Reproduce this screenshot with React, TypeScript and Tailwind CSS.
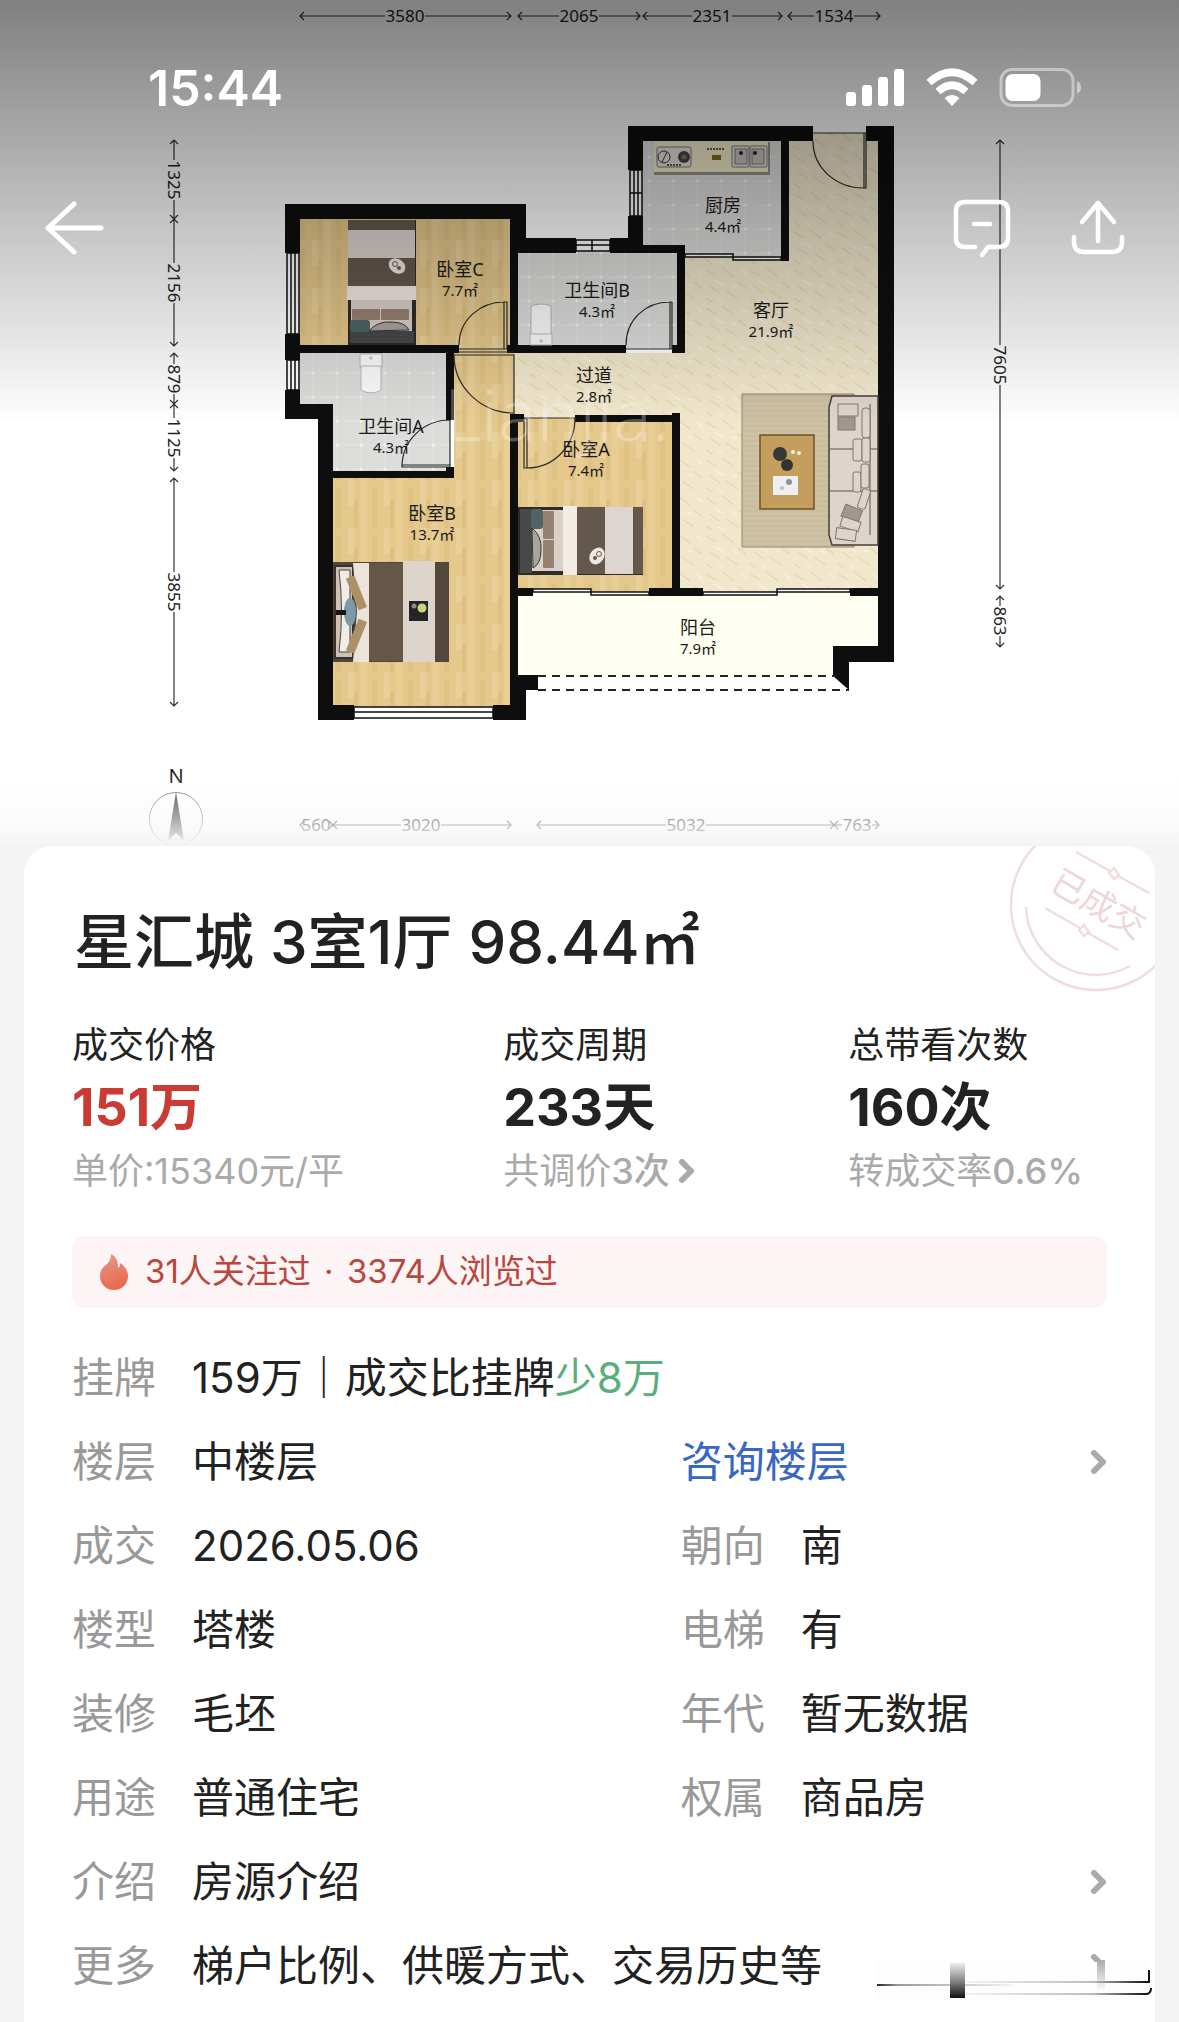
import type { ReactNode } from "react";

const wall = "#0e0e0e";

const rooms = [
  { name: "卧室C", area: "7.7㎡", x: 460, y: 276 },
  { name: "卫生间B", area: "4.3㎡", x: 597, y: 297 },
  { name: "厨房", area: "4.4㎡", x: 723, y: 212 },
  { name: "客厅", area: "21.9㎡", x: 771, y: 317 },
  { name: "过道", area: "2.8㎡", x: 594, y: 382 },
  { name: "卫生间A", area: "4.3㎡", x: 391, y: 433 },
  { name: "卧室A", area: "7.4㎡", x: 586, y: 456 },
  { name: "卧室B", area: "13.7㎡", x: 432, y: 520 },
  { name: "阳台", area: "7.9㎡", x: 698, y: 634 },
];

// from / to along the axis, `at` is the middle of the number
const topSizes = [
  { from: 300, to: 511, at: 405, label: "3580" },
  { from: 518, to: 640, at: 579, label: "2065" },
  { from: 643, to: 782, at: 712, label: "2351" },
  { from: 788, to: 880, at: 834, label: "1534" },
];
const bottomSizes = [
  { from: 300, to: 333, at: 316, label: "560" },
  { from: 333, to: 511, at: 421, label: "3020" },
  { from: 537, to: 834, at: 686, label: "5032" },
  { from: 834, to: 879, at: 857, label: "763" },
];
const leftSizes = [
  { from: 140, to: 219, at: 180, label: "1325" },
  { from: 219, to: 346, at: 283, label: "2156" },
  { from: 353, to: 404, at: 379, label: "879" },
  { from: 404, to: 471, at: 438, label: "1125" },
  { from: 478, to: 706, at: 592, label: "3855" },
];
const rightSizes = [
  { from: 140, to: 589, at: 365, label: "7605" },
  { from: 596, to: 647, at: 621, label: "863" },
];

type Size = { from: number; to: number; at: number; label: string };

function SizeLine({ size }: { size: Size }) {
  const half = size.label.length * 5;
  return (
    <g>
      <path
        d={`M${size.from} 0H${size.at - half}M${size.at + half} 0H${size.to}M${size.from + 4} -4L${size.from} 0L${size.from + 4} 4M${size.to - 4} -4L${size.to} 0L${size.to - 4} 4`}
        fill="none"
        stroke="#333"
        strokeWidth="1.2"
      />
      <text x={size.at} y="6" textAnchor="middle" fontSize="17" fill="#222">
        {size.label}
      </text>
    </g>
  );
}

// head of the bed on the left, 125 x 69
function Bed() {
  return (
    <g>
      <rect x="0" y="1" width="125" height="68" fill="#2f2b28" />
      <rect x="2" y="3" width="12" height="64" fill="#474948" />
      <rect x="14" y="4" width="34" height="61" fill="#d9d0c9" />
      <rect x="13" y="3" width="12" height="20" rx="3" fill="#4f6465" />
      <path d="M14 22Q24 30 23 44Q23 58 15 62Z" fill="#a8a4a0" stroke="#3b3532" />
      <rect x="25" y="5" width="11" height="28" rx="1" fill="#978171" />
      <rect x="25" y="34" width="11" height="28" rx="1" fill="#978171" />
      <rect x="45" y="0" width="14" height="69" fill="#f3ece4" />
      <rect x="59" y="1" width="28" height="67" fill="#64584d" />
      <rect x="87" y="1" width="28" height="67" fill="#ddd5d0" />
      <rect x="115" y="1" width="10" height="67" fill="#64584d" />
      <ellipse cx="79" cy="50" rx="7" ry="9" transform="rotate(35 79 50)" fill="#eee8e4" />
      <circle cx="77" cy="52" r="2" fill="#6b5a50" />
      <circle cx="81" cy="48" r="2.5" fill="none" stroke="#6b5a50" />
    </g>
  );
}

function DoubleBed() {
  return (
    <g>
      <rect x="333" y="562" width="116" height="100" fill="#51463c" />
      <rect x="335" y="566" width="18" height="92" fill="#cfc2b5" stroke="#3a312b" strokeWidth="2" />
      <path d="M339 570H350V652H339Q344 611 339 570Z" fill="#f2ece7" stroke="#4a403a" />
      <path d="M353 563H369V662H353L357 611Z" fill="#ece3da" />
      <rect x="352" y="576" width="9" height="34" transform="rotate(-22 356 593)" fill="#ab9165" />
      <rect x="352" y="619" width="9" height="34" transform="rotate(22 356 636)" fill="#ab9165" />
      <ellipse cx="350" cy="612" rx="6" ry="14" fill="#7d9ba6" />
      <path d="M336 610H346V615H336Z" fill="#161616" />
      <rect x="369" y="563" width="34" height="98" fill="#655648" />
      <rect x="403" y="561" width="32" height="101" fill="#ddd5cc" />
      <rect x="435" y="563" width="14" height="98" fill="#54483d" />
      <rect x="409" y="601" width="19" height="20" fill="#242424" />
      <circle cx="422" cy="608" r="4.5" fill="#c8d67a" />
      <circle cx="414" cy="606" r="2.5" fill="#8b8b8b" />
    </g>
  );
}

function Sofa() {
  return (
    <g>
      <path d="M742 394H854V547H742Z" fill="#cfc1a4" stroke="#8e836c" />
      <path d="M742 394H854V547H742Z" fill="url(#rug)" />
      <rect x="760" y="435" width="54" height="74" fill="#c49e5c" stroke="#6d5129" strokeWidth="1.5" />
      <circle cx="780" cy="454" r="7" fill="#353838" />
      <circle cx="787" cy="465" r="6" fill="#303333" />
      <circle cx="793" cy="452" r="2" fill="#f4eee0" />
      <circle cx="799" cy="453" r="2" fill="#f4eee0" />
      <rect x="773" y="476" width="25" height="19" fill="#eeeff0" />
      <circle cx="789" cy="482" r="3" fill="#87949a" />
      <circle cx="782" cy="488" r="2" fill="#b8c0c4" />
      <path d="M832 396H878V545H832L829 535V407Z" fill="#ddd4cc" stroke="#463d37" strokeWidth="1.5" />
      <path d="M830 449H878M830 491H878M870 404V535" stroke="#5a504a" fill="none" />
      <g fill="#ddd4cc" stroke="#81766f">
        <rect x="838" y="404" width="20" height="12" />
        <rect x="838" y="417" width="17" height="13" fill="#9f9792" />
        <rect x="862" y="408" width="8" height="30" rx="3" />
        <rect x="853" y="439" width="9" height="22" rx="2" />
        <rect x="862" y="438" width="8" height="24" rx="2" />
        <rect x="853" y="472" width="8" height="20" rx="2" />
        <rect x="861" y="464" width="8" height="24" rx="2" />
        <rect x="860" y="489" width="8" height="20" rx="2" transform="rotate(18 864 499)" />
        <rect x="843" y="507" width="18" height="13" transform="rotate(22 852 513)" fill="#9f9792" />
        <rect x="841" y="519" width="19" height="10" transform="rotate(18 850 524)" />
        <rect x="836" y="529" width="20" height="11" transform="rotate(8 846 534)" />
      </g>
    </g>
  );
}

function Kitchen() {
  return (
    <g>
      <rect x="654" y="142" width="116" height="33" fill="#6e6b60" opacity="0.7" />
      <rect x="654" y="141" width="114" height="31" fill="#efe8c6" />
      <g fill="none" stroke="#777">
        <rect x="657" y="147" width="34" height="20" rx="2" fill="#e2e0d8" />
        <rect x="732" y="146" width="17" height="21" rx="1" fill="#e2e0d8" />
        <rect x="750" y="146" width="17" height="21" rx="1" fill="#e2e0d8" />
        <rect x="735" y="149" width="12" height="15" fill="#c2c1bd" />
        <rect x="752" y="149" width="12" height="15" fill="#c2c1bd" />
        <circle cx="664" cy="157" r="6" stroke="#333" />
        <path d="M662 162L667 152" stroke="#333" />
      </g>
      <circle cx="684" cy="157" r="6" fill="#44443f" />
      <circle cx="684" cy="157" r="2.5" fill="#74736c" />
      <circle cx="741" cy="153" r="2" fill="#222" />
      <circle cx="755" cy="153" r="2" fill="#222" />
      <path d="M667 165H682M707 149H725" stroke="#5b573f" strokeWidth="2" strokeDasharray="2 1" />
      <rect x="712" y="155" width="9" height="5" fill="#7d6b22" />
    </g>
  );
}

function FloorPlan() {
  return (
    <svg viewBox="0 0 1179 846" className="block w-full h-auto font-['Noto_Sans','Noto_Sans_CJK_SC',sans-serif]" role="img" aria-label="户型图">
      <defs>
        <pattern id="wood" width="36" height="48" patternUnits="userSpaceOnUse">
          <rect width="36" height="48" fill="#e4c88c" />
          <rect width="7" height="48" fill="#e8ce95" />
          <rect x="12" y="8" width="5" height="40" fill="#e0c284" />
          <rect x="24" width="6" height="26" fill="#e9d09a" />
          <rect x="30" y="20" width="4" height="28" fill="#dfc081" />
        </pattern>
        <pattern id="tile" x="301" y="241" width="24" height="24" patternUnits="userSpaceOnUse">
          <rect width="24" height="24" fill="#dcdddb" />
          <path d="M0 12H24M12 0V24" stroke="#e4e5e3" />
          <circle cx="12" cy="12" r="1.5" fill="#f4f5f3" />
        </pattern>
        <pattern id="marble" width="44" height="38" patternUnits="userSpaceOnUse">
          <rect width="44" height="38" fill="#f0e7cc" />
          <path d="M2 4L12 10M18 2L30 11M34 16L42 22M6 20L16 27M22 25L34 33M2 32L8 36" stroke="#e9d8ab" strokeWidth="1.4" />
          <path d="M10 14L20 20M28 18L33 21M14 33L19 36M37 4L43 9" stroke="#f6f0df" strokeWidth="2" />
        </pattern>
        <pattern id="rug" width="5" height="5" patternUnits="userSpaceOnUse">
          <path d="M0 1H5" stroke="#bfb195" strokeWidth="0.7" />
        </pattern>
        <linearGradient id="shade" x1="0" y1="0" x2="0" y2="1">
          <stop offset="0" stopColor="#000" stopOpacity="0.5" />
          <stop offset="0.3" stopColor="#000" stopOpacity="0.35" />
          <stop offset="0.55" stopColor="#000" stopOpacity="0.22" />
          <stop offset="0.8" stopColor="#000" stopOpacity="0.1" />
          <stop offset="1" stopColor="#000" stopOpacity="0" />
        </linearGradient>
        <linearGradient id="fade" x1="0" y1="0" x2="0" y2="1">
          <stop offset="0" stopColor="#fff" stopOpacity="0" />
          <stop offset="0.25" stopColor="#fdfdfd" stopOpacity="0.1" />
          <stop offset="0.75" stopColor="#f9f9f9" stopOpacity="0.66" />
          <stop offset="1" stopColor="#f4f4f4" stopOpacity="1" />
        </linearGradient>
      </defs>
      <rect width="1179" height="846" fill="#fff" />

      {/* floors */}
      <path d="M526 353H685V253H785V133H880V592H676V418H514V353Z" fill="url(#marble)" />
      <path d="M296 215H514V349H296ZM454 349H514V710H325V475H454ZM514 418H676V592H514Z" fill="url(#wood)" />
      <path d="M514 353H528V418H514Z" fill="url(#marble)" />
      <path d="M296 349H450V475H329V408H296ZM514 245H681V349H514ZM640 137H785V257H681V249H640Z" fill="url(#tile)" />
      <path d="M516 592H882V650H836V676H516Z" fill="#fdfff0" />

      {/* walls */}
      <g fill={wall}>
        <path d="M285 204H526V238H576V253H518V353H507V345H510V219H300V253H285Z" />
        <path d="M285 334H300V345H459V353H454V420H446V353H300V360H285Z" />
        <path d="M285 390H300V404H333V471H446V467H454V478H333V705H354V720H318V419H285Z" />
        <path d="M493 705H510V414H524V422H518V588H533V596H518V675H538V690H526V720H493Z" />
        <path d="M518 345H626V353H507V345Z" />
        <path d="M610 238H628V216H643V245H685V353H672V345H677V253H610Z" />
        <path d="M628 126H813V141H789V261H781V141H643V170H628Z" />
        <path d="M866 126H894V662H849V690L833 676V646H878V596H850V588H878V141H866Z" />
        <path d="M575 415H672V413H680V588H703V596H649V588H672V422H575Z" />
      </g>

      {/* windows and sliding doors */}
      <g fill="#fff" stroke={wall} strokeWidth="1.5">
        <path d="M287 253H299V334H287ZM287 360H299V390H287ZM630 170H642V216H630ZM576 240H610V251H576ZM354 707H493V718H354Z" />
        <path d="M291 253V334M295 253V334M291 360V390M295 360V390M634 170V216M638 170V216M630 193H642M576 245H610M592 240V251M354 712H493" fill="none" />
        <path d="M685 254H733V257H685ZM733 257H781V260H733ZM533 589H591V592H533ZM591 592H649V595H591ZM703 592H777V595H703ZM777 589H850V592H777Z" />
      </g>
      <path d="M538 676H836M538 690H849" stroke="#222" strokeWidth="2" strokeDasharray="8 6" />

      {/* doors */}
      <g fill="none" stroke="#2b2a26" strokeWidth="1.2">
        <path d="M813 133H866V188H864V133M813 141C813 168 836 188 864 188" />
        <path d="M459 349H507V302H504V349M459 345C459 320 480 302 504 302M459 352H514" />
        <path d="M626 349H672V302H670V349M626 345C626 320 645 302 670 302" />
        <path d="M454 355H514V414M454 355C454 388 482 413 514 413" />
        <path d="M450 420C424 420 402 440 402 467H450V465H402M450 420V467" />
        <path d="M524 418H575M524 418V468H527V418M575 418C575 446 554 468 527 468" />
      </g>

      {/* furniture */}
      <g transform="translate(347 345) rotate(-90)">
        <Bed />
      </g>
      <g transform="translate(518 506)">
        <Bed />
      </g>
      <DoubleBed />
      <Sofa />
      <Kitchen />
      <g fill="#fafafb" stroke="#b5b5b8">
        <path d="M360 354H382V367H381V390Q371 396 361 390V367H360Z" />
        <path d="M360 366H382" />
        <path d="M530 345H552V333H551V306Q541 302 531 306V333H530Z" />
        <path d="M530 334H552" />
        <circle cx="371" cy="358" r="1.2" />
        <circle cx="541" cy="341" r="1.2" />
      </g>

      {rooms.map((room) => (
        <g key={room.name} textAnchor="middle" fill="#1b1b1b">
          <text x={room.x} y={room.y} fontSize="18">{room.name}</text>
          <text x={room.x} y={room.y + 20} fontSize="15">{room.area}</text>
        </g>
      ))}
      <text x="444" y="441" fontSize="72" fontWeight="300" fill="#fff" opacity="0.28">Lianjia.</text>

      {/* measurements */}
      <g transform="translate(0 16)">
        {topSizes.map((s) => <SizeLine key={s.label} size={s} />)}
      </g>
      <g transform="translate(0 825)">
        {bottomSizes.map((s) => <SizeLine key={s.label} size={s} />)}
      </g>
      <g transform="translate(174 0) rotate(90)">
        {leftSizes.map((s) => <SizeLine key={s.label} size={s} />)}
      </g>
      <g transform="translate(1000 0) rotate(90)">
        {rightSizes.map((s) => <SizeLine key={s.label} size={s} />)}
      </g>

      {/* compass */}
      <text x="176" y="783" textAnchor="middle" fontSize="20" fill="#111">N</text>
      <circle cx="176" cy="819" r="26.5" fill="none" stroke="#777" />
      <path d="M176 792L184 841L176 833L168 841Z" fill="#333" />

      <rect width="1179" height="425" fill="url(#shade)" />
      <rect y="756" width="1179" height="90" fill="url(#fade)" />
    </svg>
  );
}

function StatusIcons() {
  return (
    <svg width="236" height="40" viewBox="0 0 236 40" fill="#fff" aria-hidden="true">
      <rect x="0" y="24" width="10" height="14" rx="3" />
      <rect x="16" y="17" width="10" height="21" rx="3" />
      <rect x="32" y="9" width="10" height="29" rx="3" />
      <rect x="48" y="1" width="10" height="37" rx="3" />
      <g fill="none" stroke="#fff" strokeWidth="7.5">
        <path d="M83 14.5Q106 -6 129 14.5" />
        <path d="M92 23.5Q106 11 120 23.5" />
      </g>
      <path d="M98.500 30Q106 24 113.500 30L106 38Z" />
      <rect x="155" y="1.500" width="72" height="36" rx="11" fill="none" stroke="#fff" strokeOpacity="0.45" strokeWidth="3" />
      <rect x="159.500" y="6" width="35" height="27" rx="7" />
      <path d="M231 13Q235 15 235 19.500Q235 24 231 26Z" fillOpacity="0.5" />
    </svg>
  );
}

function BackIcon() {
  return (
    <svg width="60" height="54" viewBox="0 0 60 54" fill="none" stroke="#fff" strokeWidth="5" strokeLinecap="round" strokeLinejoin="round">
      <path d="M56 27H3M29 3L3 27L29 51" />
    </svg>
  );
}

function MessageIcon() {
  return (
    <svg width="60" height="60" viewBox="0 0 60 60" fill="none" stroke="#fff" strokeWidth="4.500" strokeLinecap="round" strokeLinejoin="round">
      <path d="M23 49H13Q4 49 4 40V13Q4 4 13 4H47Q56 4 56 13V40Q56 49 47 49H36L30 57M22 26H38" />
    </svg>
  );
}

function ShareIcon() {
  return (
    <svg width="56" height="60" viewBox="0 0 56 60" fill="none" stroke="#fff" strokeWidth="4.500" strokeLinecap="round" strokeLinejoin="round">
      <path d="M28 43V5M12 24L28 5L44 24M4 39V44Q4 54 14 54H42Q52 54 52 44V39" />
    </svg>
  );
}

function Chevron() {
  return (
    <svg width="17" height="25" viewBox="0 0 17 25" fill="none" stroke="#aaa" strokeWidth="6" strokeLinecap="round" strokeLinejoin="round" className="shrink-0">
      <path d="M4 3L13 12L4 21" />
    </svg>
  );
}

function Flame() {
  return (
    <svg width="29" height="36" viewBox="0 0 29 36" className="shrink-0" aria-hidden="true">
      <defs>
        <linearGradient id="flame" x1="0" y1="0" x2="0.3" y2="1">
          <stop offset="0" stopColor="#e79a8d" />
          <stop offset="1" stopColor="#ea6a4e" />
        </linearGradient>
      </defs>
      <path d="M11 0C17 3 18 8 18 14C20 13 20 11 20 9C25 12 28 17 28 22C28 30 22 36 14 36C6 36 0 30 0 22C0 16 3 13 7 10C10 7 11 4 11 0Z" fill="url(#flame)" />
    </svg>
  );
}

function Stamp() {
  return (
    <svg width="146" height="146" viewBox="0 0 146 146" className="absolute top-0 right-0" fill="none" stroke="#f1dcde" strokeWidth="2.500">
      <circle cx="87" cy="59" r="85" />
      <path d="M17 61A70 70 0 0 0 121 120" />
      <path d="M67 6L101 25M109 30L140 47M36 62L71 82M79 87L109 104" />
      <path d="M105 22L110 29L105 33L100 27ZM75 79L80 86L75 90L70 84Z" />
      <text x="90" y="70" textAnchor="middle" transform="rotate(30 90 57)" fontSize="34" fill="#efd6d9" stroke="none">
        已成交
      </text>
    </svg>
  );
}

// compressed corner at the end of the last row
function Smudge() {
  return (
    <svg width="280" height="44" viewBox="0 0 280 44" className="absolute bottom-[20px] right-0" aria-hidden="true">
      <defs>
        <linearGradient id="bar" x1="0" y1="0" x2="0" y2="1">
          <stop offset="0" stopColor="#eee" />
          <stop offset="0.5" stopColor="#888" />
          <stop offset="1" stopColor="#111" />
        </linearGradient>
        <linearGradient id="smear" x1="0" y1="0" x2="0" y2="1">
          <stop offset="0" stopColor="#aaa" />
          <stop offset="1" stopColor="#fff" />
        </linearGradient>
        <linearGradient id="lineStart" x1="0" y1="0" x2="1" y2="0">
          <stop offset="0" stopColor="#222" />
          <stop offset="0.15" stopColor="#999" />
          <stop offset="1" stopColor="#f4f4f4" />
        </linearGradient>
        <linearGradient id="lineEnd" x1="0" y1="0" x2="1" y2="0">
          <stop offset="0" stopColor="#f4f4f4" />
          <stop offset="0.7" stopColor="#bbb" />
          <stop offset="1" stopColor="#111" />
        </linearGradient>
      </defs>
      <rect x="0" y="4" width="274" height="38" fill="#fdfdfd" />
      <rect x="2" y="26" width="136" height="2" fill="url(#lineStart)" />
      <rect x="75" y="5" width="15" height="35" fill="url(#bar)" />
      <rect x="222" y="2" width="8" height="32" fill="url(#smear)" />
      <rect x="90" y="23" width="182" height="2" fill="url(#lineEnd)" />
      <rect x="90" y="35" width="182" height="2" fill="url(#lineEnd)" />
      <path d="M274 12V24H270M276 30Q276 36 271 36" fill="none" stroke="#111" strokeWidth="2" />
    </svg>
  );
}

function Field({ label, children }: { label: string; children: ReactNode }) {
  return (
    <div className="flex gap-9">
      <dt className="text-[#999] shrink-0">{label}</dt>
      <dd className="whitespace-nowrap">{children}</dd>
    </div>
  );
}

const pairs = [
  [["成交", "2026.05.06"], ["朝向", "南"]],
  [["楼型", "塔楼"], ["电梯", "有"]],
  [["装修", "毛坯"], ["年代", "暂无数据"]],
  [["用途", "普通住宅"], ["权属", "商品房"]],
];

export default function App() {
  return (
    <div className="min-h-screen bg-[#f4f4f4] flex flex-col text-[#222] font-['Inter','Noto_Sans_CJK_SC',sans-serif]">
      {/* Header */}
      <header className="grid">
        <div className="col-start-1 row-start-1">
          <FloorPlan />
        </div>
        <div className="col-start-1 row-start-1 z-10">
          <div className="flex items-center justify-between pt-[58px] pl-[148px] pr-[97px] text-white">
            <span className="text-[50px] leading-[60px] font-semibold">15:44</span>
            <StatusIcons />
          </div>
          <nav className="flex items-center justify-between pt-20 pl-[45px] pr-[53px]">
            <button aria-label="返回"><BackIcon /></button>
            <div className="flex items-center gap-[58px]">
              <button aria-label="消息"><MessageIcon /></button>
              <button aria-label="分享"><ShareIcon /></button>
            </div>
          </nav>
        </div>
      </header>

      {/* Card */}
      <main className="relative flex-1 mx-6 px-12 pt-[60px] pb-3 bg-white rounded-t-[28px] overflow-hidden">
        <Stamp />
        <h1 className="pl-0.5 text-[60px] leading-[72px] font-medium">星汇城 3室1厅 98.44㎡</h1>

        <section className="mt-10 grid grid-cols-[5fr_4fr_3fr] text-[36px] leading-[54px] whitespace-nowrap">
          <div>
            <p>成交价格</p>
            <p className="text-[52px] leading-[72px] font-bold text-[#cb3b34]">151万</p>
            <p className="text-[#aaa]">单价:15340元/平</p>
          </div>
          <div>
            <p>成交周期</p>
            <p className="text-[52px] leading-[72px] font-bold">233天</p>
            <button className="flex items-center gap-2 text-[#aaa]">
              <span>共调价<span className="font-medium">3次</span></span>
              <Chevron />
            </button>
          </div>
          <div>
            <p>总带看次数</p>
            <p className="text-[52px] leading-[72px] font-bold">160次</p>
            <p className="text-[#aaa]">转成交率<span className="font-medium">0.6%</span></p>
          </div>
        </section>

        <div className="mt-[38px] flex items-center gap-4 h-[72px] px-7 rounded-xl bg-[#fdf4f5] text-[#b8473f] text-[33px]">
          <Flame />
          <span>31人关注过<span className="mx-1"> · </span>3374人浏览过</span>
        </div>

        <dl className="mt-7 text-[42px] leading-[84px]">
          <Field label="挂牌">
            159万｜成交比挂牌<span className="text-[#5aae7c]">少8万</span>
          </Field>
          <div className="grid grid-cols-[10fr_7fr]">
            <Field label="楼层">中楼层</Field>
            <a href="#floor" className="flex items-center justify-between text-[#3a66c4]">
              咨询楼层
              <Chevron />
            </a>
          </div>
          {pairs.map(([left, right]) => (
            <div key={left[0]} className="grid grid-cols-[10fr_7fr]">
              <Field label={left[0]}>{left[1]}</Field>
              <Field label={right[0]}>{right[1]}</Field>
            </div>
          ))}
          <a href="#intro" className="flex items-center justify-between">
            <Field label="介绍">房源介绍</Field>
            <Chevron />
          </a>
          <a href="#more" className="flex items-center justify-between">
            <Field label="更多">梯户比例、供暖方式、交易历史等</Field>
            <Chevron />
          </a>
        </dl>
        <Smudge />
      </main>
    </div>
  );
}
